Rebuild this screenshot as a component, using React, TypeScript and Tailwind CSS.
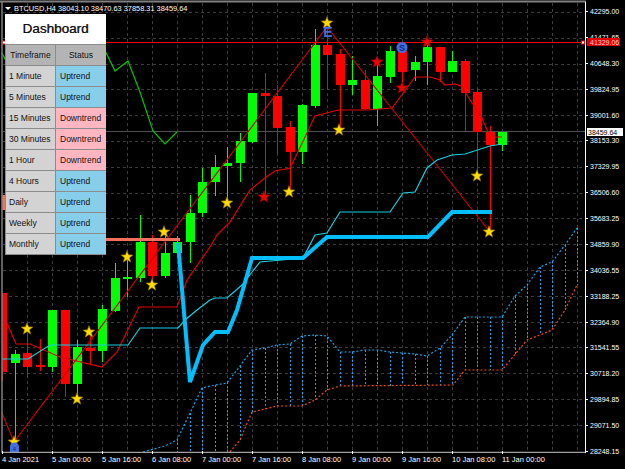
import React from 'react';

// k = bar index, top/bottom = body, hi/lo = wick
type Bar = [number, number, number, number, number, 'g' | 'r'];

const bars: Bar[] = [
  [0, 293, 372, 293, 381, 'r'],
  [1, 354, 363, 350, 440, 'g'],
  [2, 353, 367, 333, 378, 'r'],
  [3, 365, 367, 339, 371, 'r'],
  [4, 310, 367, 310, 372, 'g'],
  [5, 310, 384, 310, 397, 'r'],
  [6, 347, 384, 340, 400, 'g'],
  [7, 348, 351, 333, 365, 'r'],
  [8, 309, 351, 305, 362, 'g'],
  [9, 278, 311, 263, 312, 'g'],
  [10, 277, 279, 257, 297, 'g'],
  [11, 242, 278, 215, 282, 'g'],
  [12, 242, 276, 235, 280, 'r'],
  [13, 253, 276, 230, 278, 'g'],
  [14, 242, 253, 236, 254, 'g'],
  [15, 213, 242, 195, 263, 'g'],
  [16, 182, 213, 168, 217, 'g'],
  [17, 167, 182, 155, 196, 'g'],
  [18, 163, 166, 147, 200, 'g'],
  [19, 141, 163, 133, 182, 'g'],
  [20, 93, 142, 93, 143, 'g'],
  [21, 93, 96, 73, 197, 'r'],
  [22, 96, 128, 85, 154, 'r'],
  [23, 127, 152, 121, 190, 'r'],
  [24, 105, 152, 104, 164, 'g'],
  [25, 45, 106, 29, 108, 'g'],
  [26, 45, 55, 30, 90, 'r'],
  [27, 54, 85, 49, 128, 'r'],
  [28, 80, 85, 56, 95, 'g'],
  [29, 80, 109, 70, 110, 'r'],
  [30, 76, 109, 65, 126, 'g'],
  [31, 51, 77, 46, 83, 'g'],
  [32, 51, 72, 47, 88, 'r'],
  [33, 62, 70, 56, 81, 'g'],
  [34, 47, 62, 42, 85, 'g'],
  [35, 47, 72, 47, 82, 'r'],
  [36, 61, 72, 51, 72, 'g'],
  [37, 61, 93, 59, 132, 'r'],
  [38, 92, 132, 88, 176, 'r'],
  [39, 132, 145, 126, 232, 'r'],
  [40, 132, 145, 132, 151, 'g'],
];

const zigzag = '2,413 14,442 327,27 490,232';
const redMa =
  '7,323 16,344 30,344 60,357 102,367 117,352 139,307 177,307 187,280 210,247 217,235 230,222 250,190 265,178 275,171 290,168 295,158 315,116 338,110 367,110 392,108 415,77 430,77 440,80 445,85 455,84 461,86 482,118 488,132 495,137 502,137';
const greenLine = '2,53 6,61';
const greenLine2 = '105.7,52 115,71 128,61 140,92 153,131 165,144 177,132';
const cyanLine =
  '2,359 28,359 50,345 128,345 140,328 178,328 185,320 197,310 210,300 215,298 227,298 242,285 252,272 260,262 303,258 315,235 327,233 340,212 390,212 403,193 415,192 427,168 437,160 452,155 465,154 490,146 502,144';
const thickCyan = '178,243 190,382 203,345 215,332 228,332 237,310 252,258 303,258 327,237 428,237 452,212 492,212';

const upper: [number, number][] = [
  [143, 452], [165, 446], [177, 440], [190, 413], [202, 388], [215, 385], [227, 383], [240, 366], [252, 350], [265, 348], [277, 345], [290, 344], [302, 336], [315, 335], [327, 336], [340, 352], [352, 352], [365, 350], [377, 350], [390, 352], [402, 353], [415, 354], [427, 356], [440, 348], [452, 335], [465, 317], [502, 317], [515, 296], [527, 285], [540, 267], [552, 262], [565, 245], [577, 228],
];
const lower: [number, number][] = [
  [230, 452], [240, 440], [252, 412], [265, 409], [277, 406], [302, 406], [315, 400], [327, 390], [340, 386], [453, 385], [465, 370], [502, 370], [527, 340], [540, 335], [552, 330], [565, 310], [577, 285],
];

function interp(pts: [number, number][], x: number) {
  if (x <= pts[0][0]) return pts[0][1];
  for (let i = 1; i < pts.length; i++) {
    if (x <= pts[i][0]) {
      const [x0, y0] = pts[i - 1];
      const [x1, y1] = pts[i];
      return y0 + ((y1 - y0) * (x - x0)) / (x1 - x0);
    }
  }
  return pts[pts.length - 1][1];
}

const yellowStars = [
  [27, 329], [89, 332], [77, 399], [14, 442], [127, 257], [164, 232], [152, 285], [227, 203], [289, 192], [339, 130], [327, 23], [477, 176], [489, 232],
];
const redStars = [[264, 197], [377, 62], [402, 88], [427, 42]];

function starPoints(cx: number, cy: number, r: number) {
  const out: string[] = [];
  for (let i = 0; i < 10; i++) {
    const rad = i % 2 === 0 ? r : r * 0.42;
    const a = -Math.PI / 2 + (i * Math.PI) / 5;
    out.push(`${cx + rad * Math.cos(a)},${cy + rad * Math.sin(a)}`);
  }
  return out.join(' ');
}

const gridY = [12, 38, 64, 89, 115, 141, 167, 193, 218, 244, 270, 296, 322, 347, 373, 399, 425];
const gridX = Array.from({ length: 23 }, (_, i) => 27 + i * 25);

const prices = [
  '42295.00', '41471.65', '40648.30', '39824.95', '39001.60', '38153.30', '37329.95', '36506.60', '35683.25', '34859.90', '34036.55', '33188.25', '32364.90', '31541.55', '30718.20', '29894.85', '29071.50', '28248.15',
];
const times = [
  '4 Jan 2021', '5 Jan 00:00', '5 Jan 16:00', '6 Jan 08:00', '7 Jan 00:00', '7 Jan 16:00', '8 Jan 08:00', '9 Jan 00:00', '9 Jan 16:00', '10 Jan 08:00', '11 Jan 00:00',
];

const rows = [
  ['1 Minute', 'Uptrend'],
  ['5 Minutes', 'Uptrend'],
  ['15 Minutes', 'Downtrend'],
  ['30 Minutes', 'Downtrend'],
  ['1 Hour', 'Downtrend'],
  ['4 Hours', 'Uptrend'],
  ['Daily', 'Uptrend'],
  ['Weekly', 'Uptrend'],
  ['Monthly', 'Uptrend'],
];

function Chart() {
  const ichiX = Array.from({ length: 33 }, (_, i) => 177.5 + i * 12.5);
  return (
    <svg width="586" height="453" viewBox="0 0 586 453" className="block shrink-0">
      <g shapeRendering="crispEdges">
        {gridY.map((y) => (
          <line key={y} x1="3" x2="585" y1={y + 0.5} y2={y + 0.5} stroke="#3c3c3c" strokeWidth="1" strokeDasharray="3 3" />
        ))}
        {gridX.map((x) => (
          <line key={x} x1={x + 0.5} x2={x + 0.5} y1="3" y2="452" stroke="#3c3c3c" strokeWidth="1" strokeDasharray="3 3" />
        ))}
        <line x1="3" x2="585" y1="131.5" y2="131.5" stroke="#505050" />

        {/* ichimoku cloud */}
        {ichiX.map((x) => (
          <line key={x} x1={Math.floor(x) + 0.5} x2={Math.floor(x) + 0.5} y1={interp(upper, x)} y2={interp(lower, x)} stroke="#10a8e8" strokeDasharray="2 2" />
        ))}
      </g>
      <polyline points={upper.map((p) => p.join(',')).join(' ')} fill="none" stroke="#10a8e8" strokeWidth="1.2" strokeDasharray="2 2" />
      <polyline points={lower.map((p) => p.join(',')).join(' ')} fill="none" stroke="#f04c10" strokeWidth="1.2" strokeDasharray="2 2" />

      <g shapeRendering="crispEdges">
        {bars.map(([k, top, bottom, hi, lo, c]) => {
          const x = Math.floor(2.5 + k * 12.5) + 0.5;
          const color = c === 'g' ? '#00ff00' : '#ff0000';
          return (
            <g key={k}>
              <line x1={x} x2={x} y1={hi} y2={lo} stroke={color} strokeWidth="1" />
              {k === 0 ? (
                <rect x="3" y={top} width="4" height={bottom - top} fill={color} />
              ) : (
                <rect x={x - 4.5} y={top} width="9" height={bottom - top} fill={color} />
              )}
            </g>
          );
        })}
      </g>

      <polyline points={greenLine} fill="none" stroke="#00c800" strokeWidth="1.2" />
      <polyline points={greenLine2} fill="none" stroke="#00c800" strokeWidth="1.2" />
      <polyline points={redMa} fill="none" stroke="#e40000" strokeWidth="1.2" />
      <polyline points={zigzag} fill="none" stroke="#c80000" strokeWidth="1.2" />
      <polyline points={cyanLine} fill="none" stroke="#18d0e0" strokeWidth="1.2" />
      <polyline points="105,239.5 180,239.5" fill="none" stroke="#f4705c" strokeWidth="3" />
      <rect x="2" y="195" width="3" height="15" fill="#f4705c" />
      <polyline points={thickCyan} fill="none" stroke="#00bfff" strokeWidth="4" strokeLinejoin="miter" />

      <line x1="2" x2="585" y1="42.5" y2="42.5" stroke="#ff0000" strokeWidth="1" shapeRendering="crispEdges" />
      <rect x="2.5" y="41" width="3" height="3" fill="#fff" stroke="#ff0000" strokeWidth="1" />
      <rect x="581.5" y="41" width="3" height="3" fill="#fff" stroke="#ff0000" strokeWidth="1" />

      {yellowStars.map(([x, y]) => (
        <polygon key={`${x}-${y}`} points={starPoints(x, y, 6.4)} fill="#ffdc00" stroke="#7a5a00" strokeWidth="0.6" />
      ))}
      {redStars.map(([x, y]) => (
        <polygon key={`${x}-${y}`} points={starPoints(x, y, 6.4)} fill="#f00000" stroke="#7a0000" strokeWidth="0.6" />
      ))}

      <text x="328" y="37" textAnchor="middle" fontSize="14" fontWeight="700" fill="#3f6fe0" fontFamily="Liberation Sans, sans-serif">
        E
      </text>
      <circle cx="402" cy="47.5" r="5.5" fill="#3f6fe0" />
      <text x="402" y="50.7" textAnchor="middle" fontSize="9" fontWeight="700" fill="#102a80" fontFamily="Liberation Sans, sans-serif">
        S
      </text>
      <path d="M10 452 v-5 a4.5 4.5 0 0 1 9 0 v5 z" fill="#3f6fe0" />
      <text x="14.5" y="451" textAnchor="middle" fontSize="6" fill="#102a80" fontFamily="Liberation Sans, sans-serif">
        4
      </text>

      {/* frame */}
      <line x1="0" x2="586" y1="1.5" y2="1.5" stroke="#808080" strokeWidth="2" />
      <line x1="2" x2="2" y1="2" y2="453" stroke="#808080" strokeWidth="1.5" />
      <line x1="2" x2="586" y1="452.5" y2="452.5" stroke="#a0a0a0" strokeWidth="1.5" />
      <line x1="585.5" x2="585.5" y1="2" y2="453" stroke="#ffffff" strokeWidth="1" />
    </svg>
  );
}

function Dashboard() {
  return (
    <div className="absolute left-[5px] top-[14px] w-[101px] bg-[#8c8c8c] flex flex-col gap-px pb-px px-px font-['Liberation_Sans',sans-serif] text-[8.5px] text-[#111]">
      <div className="h-[30px] -mx-px bg-white flex items-center justify-center text-[13.5px] text-[#111] [text-shadow:0.4px_0_0_#555]">
        Dashboard
      </div>
      <div className="grid grid-cols-[49px_50px] gap-px">
        <div className="h-5 bg-[#b4b4b4] flex items-center justify-center">Timeframe</div>
        <div className="h-5 bg-[#b4b4b4] flex items-center justify-center">Status</div>
        {rows.map(([tf, st]) => (
          <React.Fragment key={tf}>
            <div className="h-5 bg-[#d3d3d3] flex items-center pl-[3px]">{tf}</div>
            <div className={`h-5 flex items-center pl-[4px] ${st === 'Uptrend' ? 'bg-[#87ceeb]' : 'bg-[#ffb6c1]'}`}>{st}</div>
          </React.Fragment>
        ))}
      </div>
    </div>
  );
}

export default function App() {
  return (
    <div className="relative w-[625px] h-[469px] bg-black overflow-hidden text-white text-[7px] leading-none font-['Liberation_Sans',sans-serif]">
      <div className="flex h-[453px]">
        <Chart />
        <div className="flex-1 flex flex-col justify-between pt-[8px] -mb-[2px]">
          {prices.map((p) => (
            <div key={p} className="flex items-center h-[7px]">
              <span className="w-[2px] h-px bg-white mr-[2px]" />
              <span>{p}</span>
            </div>
          ))}
        </div>
      </div>
      <div className="flex pl-[2px] text-[7.5px]">
        {times.map((t) => (
          <div key={t} className="w-[50px] shrink-0 relative">
            <span className="absolute left-0 -top-[2px] w-px h-[3px] bg-white" />
            <span className="block pt-[3px] whitespace-nowrap">{t}</span>
          </div>
        ))}
      </div>

      <div className="absolute left-[5px] top-[5px] flex items-center gap-[3px] whitespace-nowrap text-[7.4px]">
        <span className="w-0 h-0 border-l-[3px] border-r-[3px] border-t-[3px] border-l-transparent border-r-transparent border-t-white" />
        <span>BTCUSD,H4 38043.10 38470.63 37858.31 38459.64</span>
      </div>

      <Dashboard />

      <div className="absolute left-[587px] top-[38px] w-[33px] h-[8px] bg-[#e00000] text-[#ffc8c8] flex items-center pl-[3px]">41329.06</div>
      <div className="absolute left-[587px] top-[128px] w-[36px] h-[8px] bg-white text-black flex items-center pl-[1px]">38459.64</div>
    </div>
  );
}
